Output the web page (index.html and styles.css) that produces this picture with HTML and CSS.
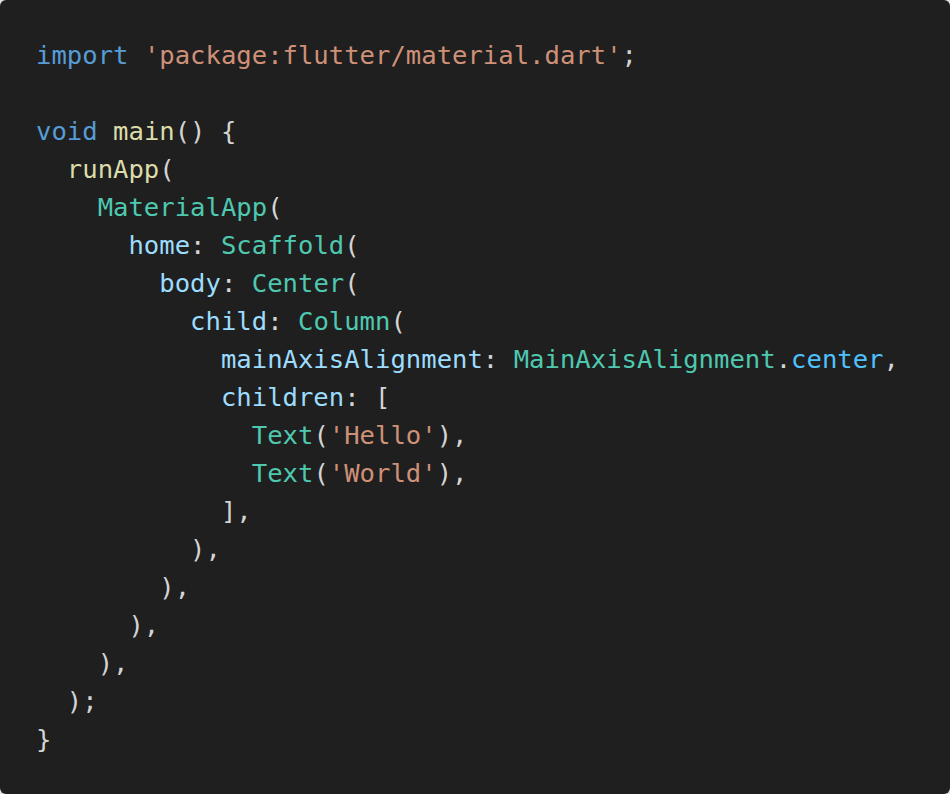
FILE: index.html
```html
<!DOCTYPE html>
<html lang="en">
<head>
<meta charset="utf-8">
<title>Flutter code</title>
<link rel="stylesheet" href="styles.css">
</head>
<body>
<pre class="code"><code><span class="kw">import</span> <span class="str">'package:flutter/material.dart'</span><span class="pn">;</span>

<span class="kw">void</span> <span class="fn">main</span><span class="pn">() {</span>
  <span class="fn">runApp</span><span class="pn">(</span>
    <span class="cls">MaterialApp</span><span class="pn">(</span>
      <span class="prop">home</span><span class="pn">:</span> <span class="cls">Scaffold</span><span class="pn">(</span>
        <span class="prop">body</span><span class="pn">:</span> <span class="cls">Center</span><span class="pn">(</span>
          <span class="prop">child</span><span class="pn">:</span> <span class="cls">Column</span><span class="pn">(</span>
            <span class="prop">mainAxisAlignment</span><span class="pn">:</span> <span class="cls">MainAxisAlignment</span><span class="pn">.</span><span class="enum">center</span><span class="pn">,</span>
            <span class="prop">children</span><span class="pn">: [</span>
              <span class="cls">Text</span><span class="pn">(</span><span class="str">'Hello'</span><span class="pn">),</span>
              <span class="cls">Text</span><span class="pn">(</span><span class="str">'World'</span><span class="pn">),</span>
            <span class="pn">],</span>
          <span class="pn">),</span>
        <span class="pn">),</span>
      <span class="pn">),</span>
    <span class="pn">),</span>
  <span class="pn">);</span>
<span class="pn">}</span></code></pre>
</body>
</html>
```
FILE: styles.css
```css
html, body {
  margin: 0;
  padding: 0;
  background: #dde4ec;
}

.code {
  margin: 0;
  box-sizing: border-box;
  width: 950px;
  height: 794px;
  padding: 36px 34px 36px 36px;
  background: #1f1f1f;
  border-radius: 6px;
  color: #d4d4d4;
  font-family: "DejaVu Sans Mono", "Liberation Mono", monospace;
  font-size: 25.6px;
  line-height: 38px;
  white-space: pre;
  overflow: hidden;
}

.code code {
  font: inherit;
}

.kw { color: #569cd6; }
.str { color: #ce9178; }
.fn { color: #dcdcaa; }
.cls { color: #4ec9b0; }
.prop { color: #9cdcfe; }
.enum { color: #4fc1ff; }
.pn { color: #d4d4d4; }
```
